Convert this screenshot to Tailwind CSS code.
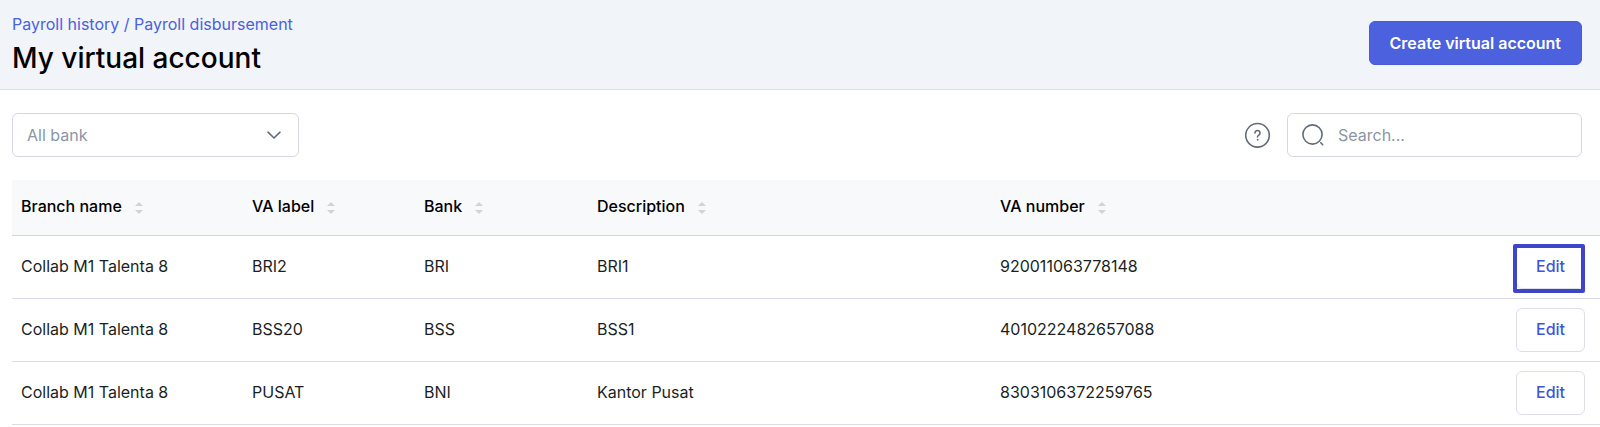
<!DOCTYPE html>
<html lang="en">
<head>
    <meta charset="UTF-8">
    <meta name="viewport" content="width=device-width, initial-scale=1.0">
    <script src="https://cdn.jsdelivr.net/npm/@tailwindcss/browser@4"></script>
    <title>My virtual account</title>
</head>
<body class="bg-white font-['Inter',sans-serif] text-base text-[#1b1f24]">
    <!-- header -->
    <header class="flex items-center justify-between bg-[#f1f4f9] border-b border-[#dcdfe6] pl-3 pr-[18px] h-[90px]">
        <div>
            <nav class="text-[#4b61dd] leading-6" aria-label="Breadcrumb">
                <a href="#" class="hover:underline">Payroll history</a> / <a href="#" class="hover:underline">Payroll disbursement</a>
            </nav>
            <h1 class="text-[28px] leading-9 pb-0.5 mt-1 font-medium text-black">My virtual account</h1>
        </div>
        <button class="h-11 px-5 mb-1 rounded-md border border-[#455bd9] bg-[#4b61dd] text-white font-semibold whitespace-nowrap">Create virtual account</button>
    </header>

    <!-- filters -->
    <div class="flex items-center justify-between pl-3 pr-[18px] py-[23px]">
        <div class="relative w-[287px]">
            <select aria-label="Bank" class="appearance-none w-full h-11 px-[14px] rounded-md border border-[#d5d8e0] bg-white text-[#8b95a5]">
                <option>All bank</option>
            </select>
            <svg class="absolute right-[17px] top-[14px] w-4 h-4 pointer-events-none" viewBox="0 0 16 16" fill="none" stroke="#626b79" stroke-width="1.6" stroke-linecap="round" stroke-linejoin="round">
                <path d="M2 5.200 8 11l6-5.800" />
            </svg>
        </div>
        <div class="flex items-center gap-4">
            <button aria-label="Help">
                <svg class="w-[26px] h-[26px]" viewBox="0 0 26 26" fill="none" stroke="#626b79" stroke-width="1.600" stroke-linecap="round">
                    <circle cx="12.500" cy="13.300" r="11.800" />
                    <path d="M10 10.900a2.500 2.500 0 1 1 3.800 2.200c-.8.500-1.300.8-1.300 1.800" />
                    <circle cx="12.500" cy="17.800" r=".5" fill="#626b79" stroke-width=".8" />
                </svg>
            </button>
            <div class="relative w-[295px]">
                <svg class="absolute left-[14px] top-[10px] w-6 h-6" viewBox="0 0 24 24" fill="none" stroke="#626b79" stroke-width="1.600" stroke-linecap="round">
                    <circle cx="11.500" cy="11.500" r="9.600" />
                    <path d="m19.800 19.800 1.900 1.900" />
                </svg>
                <input type="text" aria-label="Search" placeholder="Search..." class="w-full h-11 pl-[50px] pr-3 rounded-md border border-[#d5d8e0] bg-white placeholder:text-[#8b95a5]">
            </div>
        </div>
    </div>

    <!-- accounts table -->
    <div class="pl-3">
        <table class="w-full table-fixed border-collapse text-left">
            <thead>
                <tr class="h-[55px] bg-[#f8f9fb] border-b border-[#d0d6dd] text-black">
                    <th class="w-[231px] px-[9px] pb-[3px] font-medium">
                        <button class="flex items-center gap-[13px]">Branch name
                            <svg class="w-2 h-3 mt-1" viewBox="0 0 8 12" fill="#cfd4dc"><path d="M4 0l4 4H0zM4 12l4-4H0z" /></svg>
                        </button>
                    </th>
                    <th class="w-[172px] px-[9px] pb-[3px] font-medium">
                        <button class="flex items-center gap-[13px]">VA label
                            <svg class="w-2 h-3 mt-1" viewBox="0 0 8 12" fill="#cfd4dc"><path d="M4 0l4 4H0zM4 12l4-4H0z" /></svg>
                        </button>
                    </th>
                    <th class="w-[173px] px-[9px] pb-[3px] font-medium">
                        <button class="flex items-center gap-[13px]">Bank
                            <svg class="w-2 h-3 mt-1" viewBox="0 0 8 12" fill="#cfd4dc"><path d="M4 0l4 4H0zM4 12l4-4H0z" /></svg>
                        </button>
                    </th>
                    <th class="w-[403px] px-[9px] pb-[3px] font-medium">
                        <button class="flex items-center gap-[13px]">Description
                            <svg class="w-2 h-3 mt-1" viewBox="0 0 8 12" fill="#cfd4dc"><path d="M4 0l4 4H0zM4 12l4-4H0z" /></svg>
                        </button>
                    </th>
                    <th class="px-[9px] pb-[3px] font-medium">
                        <button class="flex items-center gap-[13px]">VA number
                            <svg class="w-2 h-3 mt-1" viewBox="0 0 8 12" fill="#cfd4dc"><path d="M4 0l4 4H0zM4 12l4-4H0z" /></svg>
                        </button>
                    </th>
                    <th class="w-[120px]" aria-label="Actions"></th>
                </tr>
            </thead>
            <tbody>
                <tr class="h-[63px] border-b border-[#dadde5]">
                    <td class="px-[9px] pb-0.5">Collab M1 Talenta 8</td>
                    <td class="px-[9px] pb-0.5">BRI2</td>
                    <td class="px-[9px] pb-0.5">BRI</td>
                    <td class="px-[9px] pb-0.5">BRI1</td>
                    <td class="px-[9px] pb-0.5">920011063778148</td>
                    <td class="pr-[15px] text-right">
                        <div class="relative inline-block align-middle">
                            <button class="w-[69px] h-11 pb-0.5 rounded-md border border-[#dcdfe6] bg-white text-[#3f55d8] font-medium">Edit</button>
                            <!-- highlight box -->
                            <span class="absolute -left-[3px] right-0 -top-px -bottom-1 border-4 border-[#3f45c8] rounded-xs pointer-events-none"></span>
                        </div>
                    </td>
                </tr>
                <tr class="h-[63px] border-b border-[#dadde5]">
                    <td class="px-[9px] pb-0.5">Collab M1 Talenta 8</td>
                    <td class="px-[9px] pb-0.5">BSS20</td>
                    <td class="px-[9px] pb-0.5">BSS</td>
                    <td class="px-[9px] pb-0.5">BSS1</td>
                    <td class="px-[9px] pb-0.5">4010222482657088</td>
                    <td class="pr-[15px] text-right">
                        <button class="w-[69px] h-11 pb-0.5 align-middle rounded-md border border-[#dcdfe6] bg-white text-[#3f55d8] font-medium">Edit</button>
                    </td>
                </tr>
                <tr class="h-[63px] border-b border-[#dadde5]">
                    <td class="px-[9px] pb-0.5">Collab M1 Talenta 8</td>
                    <td class="px-[9px] pb-0.5">PUSAT</td>
                    <td class="px-[9px] pb-0.5">BNI</td>
                    <td class="px-[9px] pb-0.5">Kantor Pusat</td>
                    <td class="px-[9px] pb-0.5">8303106372259765</td>
                    <td class="pr-[15px] text-right">
                        <button class="w-[69px] h-11 pb-0.5 align-middle rounded-md border border-[#dcdfe6] bg-white text-[#3f55d8] font-medium">Edit</button>
                    </td>
                </tr>
            </tbody>
        </table>
    </div>
</body>
</html>
